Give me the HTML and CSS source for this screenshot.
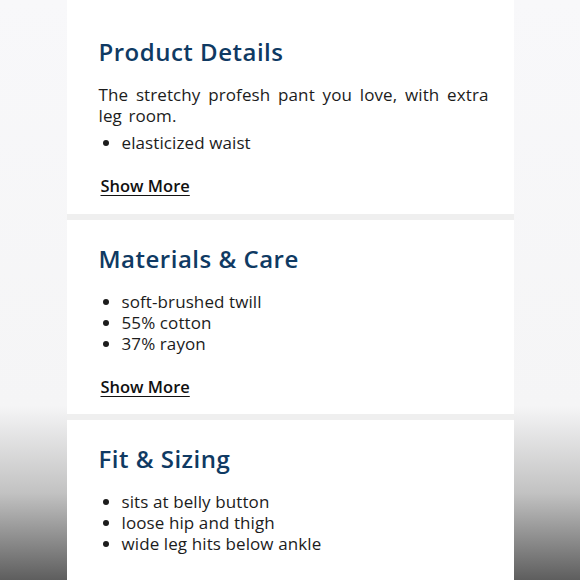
FILE: index.html
```html
<!DOCTYPE html>
<html lang="en">
<head>
  <meta charset="UTF-8">
  <title>Product Details</title>
  <meta name="viewport" content="width=device-width, initial-scale=1.0">
  <link rel="stylesheet" href="styles.css">
</head>
<body>

<div class="column">

  <!-- Product Details -->
  <section class="panel first">
    <h2>Product Details</h2>
    <p class="desc">The stretchy profesh pant you love, with extra leg room.</p>
    <ul>
      <li>elasticized waist</li>
    </ul>
    <a class="more" href="#">Show More</a>
  </section>

  <!-- Materials -->
  <section class="panel">
    <h2>Materials &amp; Care</h2>
    <ul>
      <li>soft-brushed twill</li>
      <li>55% cotton</li>
      <li>37% rayon</li>
    </ul>
    <a class="more" href="#">Show More</a>
  </section>

  <!-- Fit -->
  <section class="panel">
    <h2>Fit &amp; Sizing</h2>
    <ul>
      <li>sits at belly button</li>
      <li>loose hip and thigh</li>
      <li>wide leg hits below ankle</li>
    </ul>
    <a class="more" href="#">Show More</a>
  </section>

</div>

</body>
</html>
```

FILE: styles.css
```css
html, body { height: 100%; }
body {
  margin: 0; font-family: 'Open Sans', 'Noto Sans', sans-serif; color: #1c1c1c;
  background: linear-gradient(to bottom, #f8f8fa 0%, #f5f5f6 70%, #c2c2c2 85%, #5e5e5e 100%);
  overflow: hidden;
}
.column {
  width: 447px; margin: 0 auto; background: #efefef;
  display: flex; flex-direction: column; gap: 6px;
}
.panel { background: white; padding: 24px 25px 20px 32px; height: 194px; box-sizing: border-box; }
.panel.first { height: 214px; padding-top: 37px; }
h2 {
  margin: 0 0 17px; font-size: 24px; line-height: 30px; font-weight: 600;
  color: #0f3a63; letter-spacing: 0.5px;
}
.desc {
  margin: 0 0 6px; font-size: 17px; line-height: 21px; letter-spacing: 0.1px;
  text-align: justify; word-spacing: 2px;
}
ul { margin: 0; padding-left: 23px; font-size: 17px; line-height: 21px; letter-spacing: 0.1px; }
.more {
  display: inline-block; margin: 21px 0 0 2px; font-size: 16.5px; font-weight: 600;
  color: #111; text-decoration: underline; text-underline-offset: 3px;
}
```
